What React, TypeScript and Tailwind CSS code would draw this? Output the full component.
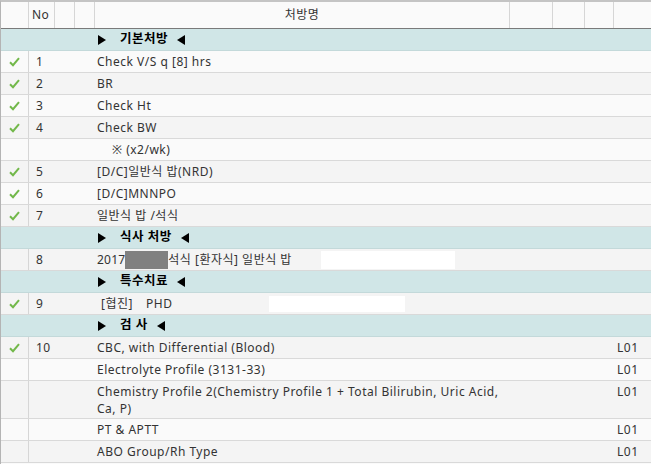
import React from "react";

type Row =
  | { kind: "group"; title: string }
  | {
      kind: "item";
      check?: boolean;
      no?: string;
      name: React.ReactNode;
      code?: string;
      tall?: boolean;
    };

const rows: Row[] = [
  { kind: "group", title: "기본처방" },
  { kind: "item", check: true, no: "1", name: "Check V/S q [8] hrs" },
  { kind: "item", check: true, no: "2", name: "BR" },
  { kind: "item", check: true, no: "3", name: "Check Ht" },
  { kind: "item", check: true, no: "4", name: "Check BW" },
  { kind: "item", name: <span className="pl-[15px]">※ (x2/wk)</span> },
  { kind: "item", check: true, no: "5", name: "[D/C]일반식 밥(NRD)" },
  { kind: "item", check: true, no: "6", name: "[D/C]MNNPO" },
  { kind: "item", check: true, no: "7", name: "일반식 밥 /석식" },
  { kind: "group", title: "식사 처방" },
  {
    kind: "item",
    no: "8",
    name: (
      <span className="flex items-center whitespace-nowrap">
        <span className="shrink-0 tracking-[0.2px]">2017</span>
        <span className="inline-block h-[18px] w-[43px] shrink-0 bg-[#808080]" />
        <span className="w-[153px] shrink-0">석식 [환자식] 일반식 밥</span>
        <span className="inline-block h-[18px] w-[134px] shrink-0 bg-white" />
      </span>
    ),
  },
  { kind: "group", title: "특수치료" },
  {
    kind: "item",
    check: true,
    no: "9",
    name: (
      <span className="flex items-center whitespace-nowrap">
        <span className="w-[49px] shrink-0 pl-[4px]">[협진]</span>
        <span className="w-[123px] shrink-0">PHD</span>
        <span className="inline-block h-[16px] w-[136px] shrink-0 bg-white" />
      </span>
    ),
  },
  { kind: "group", title: "검 사" },
  { kind: "item", check: true, no: "10", name: "CBC, with Differential (Blood)", code: "L01" },
  { kind: "item", name: "Electrolyte Profile (3131-33)", code: "L01" },
  {
    kind: "item",
    name: "Chemistry Profile 2(Chemistry Profile 1 + Total Bilirubin, Uric Acid, Ca, P)",
    code: "L01",
    tall: true,
  },
  { kind: "item", name: "PT & APTT", code: "L01" },
  { kind: "item", name: "ABO Group/Rh Type", code: "L01" },
];

function Check() {
  return (
    <svg width="11" height="10" viewBox="0 0 11 10">
      <path d="M1 5.2 L4 8.2 L10 1.2" fill="none" stroke="#72b84a" strokeWidth="2" />
    </svg>
  );
}

function Tri({ left }: { left?: boolean }) {
  return (
    <svg width="8" height="10" viewBox="0 0 8 10">
      <path d={left ? "M8 0 L0 5 L8 10 Z" : "M0 0 L8 5 L0 10 Z"} fill="#000" />
    </svg>
  );
}

export default function App() {
  return (
    <div
      className="h-[464px] w-[651px] overflow-hidden border-l border-t-2 border-l-[#b4b4b4] border-t-[#c4c4c4] bg-[#fafafa] text-[12px] tracking-[0.5px] text-[#333]"
      style={{ fontFamily: '"Noto Sans", "Noto Sans CJK KR", sans-serif' }}
    >
      {/* header */}
      <div className="flex h-[27px] border-b border-[#7a7a7a] bg-[#fafafa]">
        <div className="w-[28px] border-r border-[#d6d6d6]" />
        <div className="flex w-[26px] items-center border-r border-[#d6d6d6] pl-[3px]">No</div>
        <div className="w-[20px] border-r border-[#d6d6d6]" />
        <div className="w-[20px] border-r border-[#d6d6d6]" />
        <div className="flex w-[415px] items-center justify-center border-r border-[#d6d6d6]">처방명</div>
        <div className="w-[43px] border-r border-[#d6d6d6]" />
        <div className="w-[32px] border-r border-[#d6d6d6]" />
        <div className="w-[29px] border-r border-[#d6d6d6]" />
        <div className="flex-1" />
      </div>

      {rows.map((r, i) => {
        if (r.kind === "group") {
          return (
            <div
              key={i}
              className="flex h-[22px] items-center border-b border-[#c3d9da] bg-[#d0e6e7] text-[12.5px] font-bold text-black"
            >
              <div className="w-[97px]" />
              <Tri />
              <span className="pl-[14px] pr-[9px]">{r.title}</span>
              <Tri left />
            </div>
          );
        }
        const bg = i % 2 === 0 ? "bg-[#f4f4f4]" : "bg-[#fafafa]";
        return (
          <div
            key={i}
            className={`flex border-b border-[#d9d9d9] ${bg} ${r.tall ? "h-[38px] items-start" : "h-[22px] items-center"}`}
          >
            <div className="flex h-full w-[28px] items-center justify-center border-r border-[#d6d6d6]">
              {r.check && <Check />}
            </div>
            <div className={`w-[65px] pl-[7px] ${r.tall ? "pt-[2px]" : ""}`}>{r.no}</div>
            <div className={`w-[415px] px-[3px] leading-[17px] ${r.tall ? "pt-[2px]" : ""}`}>{r.name}</div>
            <div className="w-[104px]" />
            <div className={`flex-1 pl-[4px] ${r.tall ? "pt-[2px]" : ""}`}>{r.code}</div>
          </div>
        );
      })}
    </div>
  );
}
